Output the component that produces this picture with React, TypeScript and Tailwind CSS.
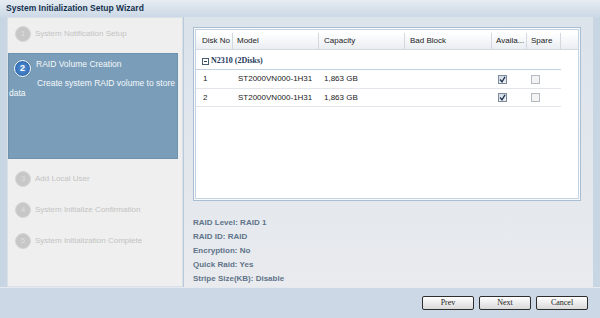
import React from 'react';

const steps = [
  { no: 1, label: 'System Notification Setup' },
  { no: 2, label: 'RAID Volume Creation', desc: 'Create system RAID volume to store', desc2: 'data' },
  { no: 3, label: 'Add Local User' },
  { no: 4, label: 'System Initialize Confirmation' },
  { no: 5, label: 'System Initialization Complete' },
];

const columns = [
  { label: 'Disk No', w: 'w-[37px] pl-[6px]' },
  { label: 'Model', w: 'w-[86px] pl-[4px]' },
  { label: 'Capacity', w: 'w-[86px] pl-[5px]' },
  { label: 'Bad Block', w: 'w-[87px] pl-[5px]' },
  { label: 'Availa...', w: 'w-[35px] pl-[4px]' },
  { label: 'Spare', w: 'w-[34px] pl-[4px]' },
];

const disks = [
  { no: '1', model: 'ST2000VN000-1H31', cap: '1,863 GB' },
  { no: '2', model: 'ST2000VN000-1H31', cap: '1,863 GB' },
];

const info = [
  'RAID Level: RAID 1',
  'RAID ID: RAID',
  'Encryption: No',
  'Quick Raid: Yes',
  'Stripe Size(KB): Disable',
];

const CheckBox = ({ checked }: { checked: boolean }) => (
  <span
    className={`flex items-center justify-center w-[9px] h-[9px] border ${
      checked ? 'border-[#7d8b9a] bg-linear-to-b from-[#d5dce4] to-[#eef1f4]' : 'border-[#b2bac3] bg-[#f3f3f3]'
    }`}
  >
    {checked && (
      <svg width="7" height="7" viewBox="0 0 7 7">
        <polyline points="1,3.5 3,5.8 6,0.8" fill="none" stroke="#1f3550" strokeWidth="1.3" />
      </svg>
    )}
  </span>
);

const StepCircle = ({ no, active }: { no: number; active?: boolean }) =>
  active ? (
    <span className="flex items-center justify-center w-[17px] h-[17px] rounded-full border-[1.5px] border-white bg-radial from-[#5b95d6] to-[#1d5ca8] text-white text-[9px] font-bold shadow-[0_0_1px_#385a80]">
      {no}
    </span>
  ) : (
    <span className="flex items-center justify-center w-[16px] h-[16px] rounded-full bg-[#c7c7c7] border border-[#d6d6d6] text-[#dedede] text-[8px]">
      {no}
    </span>
  );

const Button = ({ label }: { label: string }) => (
  <button className="w-[52px] h-[14px] border border-[#2e2e2e] rounded-[2px] bg-linear-to-b from-white to-[#d9d9d9] text-[8px] leading-[12px] text-[#222] font-['Liberation_Serif',serif]">
    {label}
  </button>
);

export default function App() {
  return (
    <div className="w-[600px] h-[318px] flex flex-col bg-[#c8d6e4] font-['Liberation_Sans',Arial,sans-serif] overflow-hidden">
      <div className="h-[17px] shrink-0 flex items-center pl-[6px] bg-linear-to-b from-[#e6ecf2] to-[#ccd9e6] text-[8.5px] font-bold text-[#16324f]">
        System Initialization Setup Wizard
      </div>

      <div className="flex-1 flex px-[7px]">
        <div className="w-[176px] bg-[#efefef] border border-[#d8e0e8] flex flex-col">
          {steps.map((s) =>
            s.no === 2 ? (
              <div key={s.no} className="mt-[9px] w-[170px] h-[106px] bg-[#7a9eb9] border border-[#6e92ad] text-[#f5f8fb]">
                <div className="flex items-start">
                  <span className="ml-[5px] mt-[6px]">
                    <StepCircle no={s.no} active />
                  </span>
                  <span className="ml-[5px] mt-[5px] text-[8.5px] leading-[10px]">{s.label}</span>
                </div>
                <div className="mt-[1px] text-[8.5px] leading-[10px] indent-[28px] whitespace-nowrap">
                  {s.desc}
                  <br />
                  {s.desc2}
                </div>
              </div>
            ) : (
              <div
                key={s.no}
                className={`flex items-center h-[20px] pl-[7px] ${
                  s.no === 1 ? 'mt-[6px]' : s.no === 3 ? 'mt-[10px]' : 'mt-[11px]'
                }`}
              >
                <StepCircle no={s.no} />
                <span className="ml-[4px] text-[8px] text-[#c3c3c3] whitespace-nowrap">{s.label}</span>
              </div>
            )
          )}
        </div>

        <div className="flex-1 flex flex-col bg-linear-to-b from-[#dbe3eb] to-[#e9ebee] border-l border-[#b9c9da] pt-[10px] pl-[9px] pr-[12px]">
          <div className="h-[174px] border border-[#a9bed3] bg-[#f7f9fb] p-[1px] flex">
            <div className="flex-1 border border-[#c4d3e2] bg-white pt-[3px]">
              <div className="flex h-[17px] bg-linear-to-b from-white to-[#eaeef2] border-b border-[#d3d9e0] text-[8px] text-[#222]">
                {columns.map((c) => (
                  <div key={c.label} className={`${c.w} flex items-center border-r border-[#d3d8de] whitespace-nowrap overflow-hidden`}>
                    {c.label}
                  </div>
                ))}
                <div className="flex-1" />
              </div>

              <div className="flex items-center h-[19px] pt-[3px] pl-[6px]">
                <span className="flex items-center justify-center w-[7px] h-[7px] border border-[#4a5c70] bg-white">
                  <span className="w-[3px] h-px bg-[#2a3d52]" />
                </span>
                <span className="ml-[2px] text-[8px] font-bold text-[#1f3a5a] font-['Liberation_Serif',serif]">N2310 (2Disks)</span>
              </div>

              <div className="w-[365px] border-t border-[#c2d2e2]">
                {disks.map((d, i) => (
                  <div key={d.no} className={`flex items-center ${i === 0 ? 'h-[19px]' : 'h-[18px]'} border-b border-[#e2e6ea] text-[8px] text-[#222]`}>
                    <div className="w-[37px] pl-[7px]">{d.no}</div>
                    <div className="w-[86px] pl-[5px] whitespace-nowrap">{d.model}</div>
                    <div className="w-[86px] pl-[5px]">{d.cap}</div>
                    <div className="w-[87px]" />
                    <div className="w-[35px] pl-[6px]">
                      <CheckBox checked />
                    </div>
                    <div className="w-[34px] pl-[4px]">
                      <CheckBox checked={false} />
                    </div>
                  </div>
                ))}
              </div>
            </div>
          </div>

          <div className="mt-[15px] flex flex-col text-[8px] leading-[14px] font-bold text-[#5f7389]">
            {info.map((t) => (
              <div key={t}>{t}</div>
            ))}
          </div>
        </div>
      </div>

      <div className="h-[31px] shrink-0 flex items-center justify-end gap-[5px] pr-[12px] border-t border-[#e4eaf0] bg-[#ccd8e5]">
        <Button label="Prev" />
        <Button label="Next" />
        <Button label="Cancel" />
      </div>
    </div>
  );
}
